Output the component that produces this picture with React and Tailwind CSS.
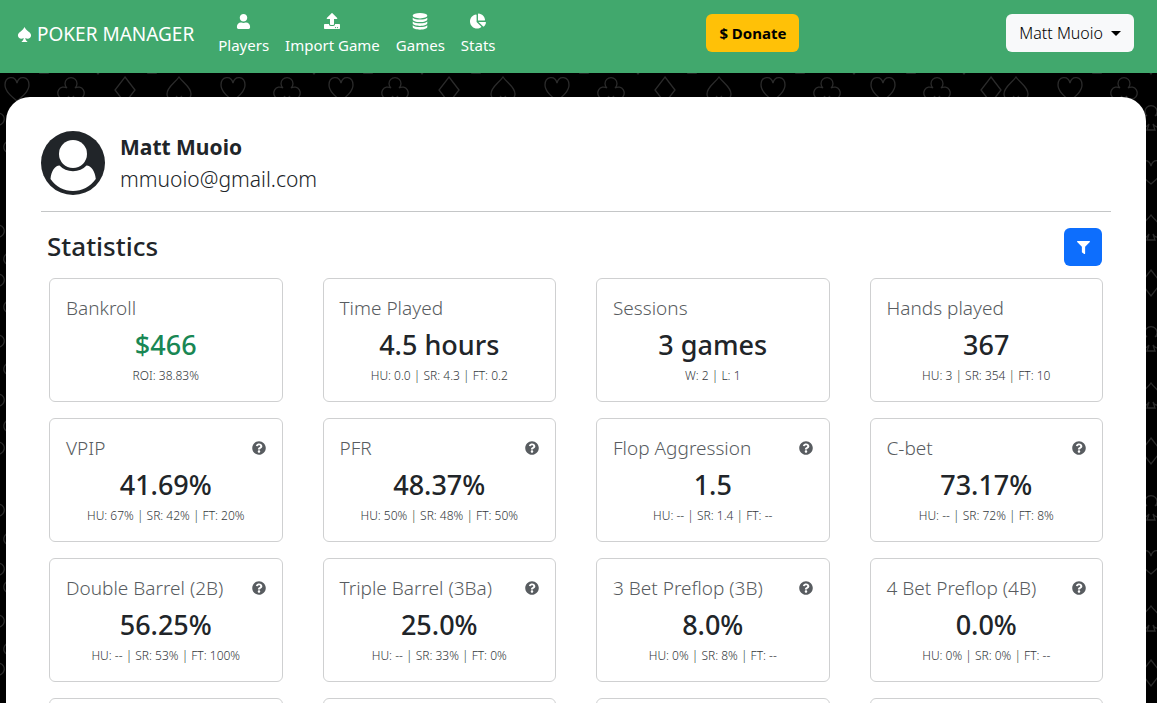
import { FaUser, FaChartPie, FaUpload, FaQuestionCircle, FaFilter } from 'react-icons/fa';
import { ImSpades } from 'react-icons/im';

const SUITS = {
  heart: 'M0 12C-6 7-12 2-12-4C-12-13-2-14 0-6C2-14 12-13 12-4C12 2 6 7 0 12Z',
  diamond: 'M0-12L10 1L0 14L-10 1Z',
  spade: 'M0-12C4-6 12-2 12 5C12 11 4 12 2 7L4 13H-4L-2 7C-4 12-12 11-12 5C-12-2-4-6 0-12Z',
  club: 'M-4-1A6 6 0 1 1 4-1A6 6 0 1 1 2 7L4 13H-4L-2 7A6 6 0 1 1-4-1Z',
};

const BACKDROP = [
  ...[
    [17, 'heart'], [71, 'club'], [125, 'diamond'], [179, 'spade'], [233, 'heart'], [287, 'club'],
    [341, 'heart'], [395, 'club'], [449, 'diamond'], [503, 'spade'], [557, 'heart'], [611, 'club'],
    [665, 'diamond'], [719, 'spade'], [773, 'heart'], [827, 'club'], [883, 'heart'], [937, 'club'],
    [991, 'diamond'], [1016, 'spade'], [1070, 'heart'], [1124, 'club'],
  ].map(([x, suit]) => [x, 89, suit]),
  ...[
    [44, 'club'], [98, 'diamond'], [152, 'spade'], [314, 'diamond'], [368, 'spade'], [422, 'diamond'],
    [476, 'club'], [584, 'spade'], [638, 'diamond'], [692, 'club'], [800, 'spade'], [854, 'diamond'],
    [911, 'club'], [964, 'diamond'], [1097, 'spade'], [1151, 'diamond'],
  ].map(([x, suit]) => [x, 60, suit]),
  ...[
    [117, 'club'], [172, 'heart'], [227, 'spade'], [282, 'diamond'], [338, 'club'], [395, 'spade'],
    [450, 'diamond'], [507, 'club'], [562, 'heart'], [618, 'spade'], [672, 'diamond'],
  ].map(([y, suit]) => [1151, y, suit]),
  ...[115, 227, 276, 337, 396, 444, 506, 565, 617, 665].map((y) => [-9, y, 'club']),
  ...[143, 255, 303, 365, 422, 535, 583, 645].map((y) => [17, y, 'club']),
];

const STATS = [
  { title: 'Bankroll', value: '$466', detail: 'ROI: 38.83%', gain: true },
  { title: 'Time Played', value: '4.5 hours', detail: 'HU: 0.0 | SR: 4.3 | FT: 0.2' },
  { title: 'Sessions', value: '3 games', detail: 'W: 2 | L: 1' },
  { title: 'Hands played', value: '367', detail: 'HU: 3 | SR: 354 | FT: 10' },
  { title: 'VPIP', value: '41.69%', detail: 'HU: 67% | SR: 42% | FT: 20%', help: true },
  { title: 'PFR', value: '48.37%', detail: 'HU: 50% | SR: 48% | FT: 50%', help: true },
  { title: 'Flop Aggression', value: '1.5', detail: 'HU: -- | SR: 1.4 | FT: --', help: true },
  { title: 'C-bet', value: '73.17%', detail: 'HU: -- | SR: 72% | FT: 8%', help: true },
  { title: 'Double Barrel (2B)', value: '56.25%', detail: 'HU: -- | SR: 53% | FT: 100%', help: true },
  { title: 'Triple Barrel (3Ba)', value: '25.0%', detail: 'HU: -- | SR: 33% | FT: 0%', help: true },
  { title: '3 Bet Preflop (3B)', value: '8.0%', detail: 'HU: 0% | SR: 8% | FT: --', help: true },
  { title: '4 Bet Preflop (4B)', value: '0.0%', detail: 'HU: 0% | SR: 0% | FT: --', help: true },
];

function Backdrop() {
  return (
    <svg className="absolute inset-0 h-full w-full" fill="none" stroke="#2b2b2b" strokeWidth="1.3" aria-hidden="true">
      {BACKDROP.map(([x, y, suit]) => (
        <path key={`${x}-${y}`} d={SUITS[suit]} transform={`translate(${x} ${y})`} />
      ))}
    </svg>
  );
}

function DatabaseIcon() {
  return (
    <svg viewBox="0 0 16 17" className="h-[17px] w-4" fill="currentColor" aria-hidden="true">
      <ellipse cx="8" cy="2.7" rx="7.3" ry="2.7" />
      <path d="M.7 4.7C2.5 6.2 5 6.5 8 6.5S13.5 6.2 15.3 4.7V6.5C15.3 8 12 9.1 8 9.1S.7 8 .7 6.500Z" />
      <path d="M.7 8.5C2.5 10 5 10.3 8 10.3S13.5 10 15.3 8.5V10.3C15.3 11.8 12 12.9 8 12.9S.7 11.8 .7 10.3Z" />
      <path d="M.7 12.3C2.5 13.8 5 14.1 8 14.1S13.5 13.8 15.3 12.3V14.1C15.3 15.6 12 16.7 8 16.7S.7 15.6 .7 14.1Z" />
    </svg>
  );
}

function Avatar() {
  return (
    <svg viewBox="0 0 64 64" className="h-16 w-16 shrink-0" role="img" aria-label="Profile">
      <circle cx="32" cy="32" r="32" fill="#212529" />
      <circle cx="32" cy="23" r="14" fill="#fff" />
      <path d="M18.5 34.5C22 38.5 26.5 40.2 32 40.2S42 38.5 45.5 34.5C50 34.5 54 40 54.8 48C49 56 41 60 32 60S15 56 9.5 48C10.2 40 14 34.5 18.5 34.5Z" fill="#fff" />
    </svg>
  );
}

function NavItem({ icon, children }) {
  return (
    <a href="#" className="flex flex-col items-center">
      <span className="flex h-6 items-center">{icon}</span>
      <span className="text-[15px] leading-6">{children}</span>
    </a>
  );
}

const CARD = 'rounded-md border border-[#cfd0d1]';

function StatCard({ title, value, detail, help, gain }) {
  return (
    <article className={`flex flex-col px-4 pt-4 pb-[14px] ${CARD}`}>
      <div className="flex h-[26px] items-center justify-between text-[#585c60]">
        <h3 className="text-[19px] font-light whitespace-nowrap">{title}</h3>
        {help && (
          <button type="button" aria-label={`About ${title}`} className="text-[14px]">
            <FaQuestionCircle />
          </button>
        )}
      </div>
      <p className={`text-center text-[27px] leading-[47px] font-medium ${gain ? 'text-[#198754]' : ''}`}>{value}</p>
      <p className="pb-1 text-center text-[12px] leading-[15px] font-light text-[#33373b]">{detail}</p>
    </article>
  );
}

export default function App() {
  return (
    <div className="relative min-h-screen overflow-hidden bg-black font-['Noto_Sans','Open_Sans',sans-serif] text-[#212529]">
      <Backdrop />
      <header className="relative flex h-[73px] items-center justify-between bg-[#41a86d] pr-[23px] pl-[17px] text-white">
        <div className="flex items-center">
          <a href="#" className="mr-6 flex items-center gap-[5px] pb-[5px] text-[19px] leading-8">
            <ImSpades className="h-[15px] w-[15px]" />
            POKER MANAGER
          </a>
          <nav className="flex gap-4 pr-1 pb-[7px]">
            <NavItem icon={<FaUser className="h-[15px] w-[15px]" />}>Players</NavItem>
            <NavItem icon={<FaUpload />}>Import Game</NavItem>
            <NavItem icon={<DatabaseIcon />}>Games</NavItem>
            <NavItem icon={<FaChartPie />}>Stats</NavItem>
          </nav>
        </div>
        <button type="button" className="mb-[7px] h-[38px] rounded-md bg-[#ffc107] px-[13px] text-[15px] font-bold text-black">
          $ Donate
        </button>
        <button type="button" className="mb-[7px] flex h-[38px] items-center gap-2 rounded-md bg-[#f8f9fa] px-[13px] text-[16px] font-light text-black">
          Matt Muoio
          <svg viewBox="0 0 10 5" className="h-[5px] w-[10px]" aria-hidden="true">
            <path d="M0 0H10L5 5Z" />
          </svg>
        </button>
      </header>

      <div className="relative pt-6 pr-[11px] pl-[6px]">
        <main className="mx-auto max-w-[1140px] rounded-t-3xl bg-white px-[35px] pt-[34px]">
          <section className="flex items-center gap-[15px] border-b border-[#c4c6c7] pb-4">
            <Avatar />
            <div className="text-[21px] leading-8">
              <p className="font-bold">Matt Muoio</p>
              <p className="font-light">mmuoio@gmail.com</p>
            </div>
          </section>

          <div className="mt-4 mb-3 flex items-center justify-between pr-[9px] pl-[6px]">
            <h2 className="pb-[2px] text-[26px] leading-[34px] font-medium">Statistics</h2>
            <button type="button" aria-label="Filter statistics" className="flex h-[38px] w-[38px] items-center justify-center rounded-md bg-[#0d6efd] text-[13px] text-white">
              <FaFilter />
            </button>
          </div>

          <section className="grid grid-cols-4 gap-x-10 gap-y-4 px-2 pb-8">
            {STATS.map((stat) => (
              <StatCard key={stat.title} {...stat} />
            ))}
            {[0, 1, 2, 3].map((slot) => (
              <article key={slot} className={`h-[124px] ${CARD}`} />
            ))}
          </section>
        </main>
      </div>
    </div>
  );
}
